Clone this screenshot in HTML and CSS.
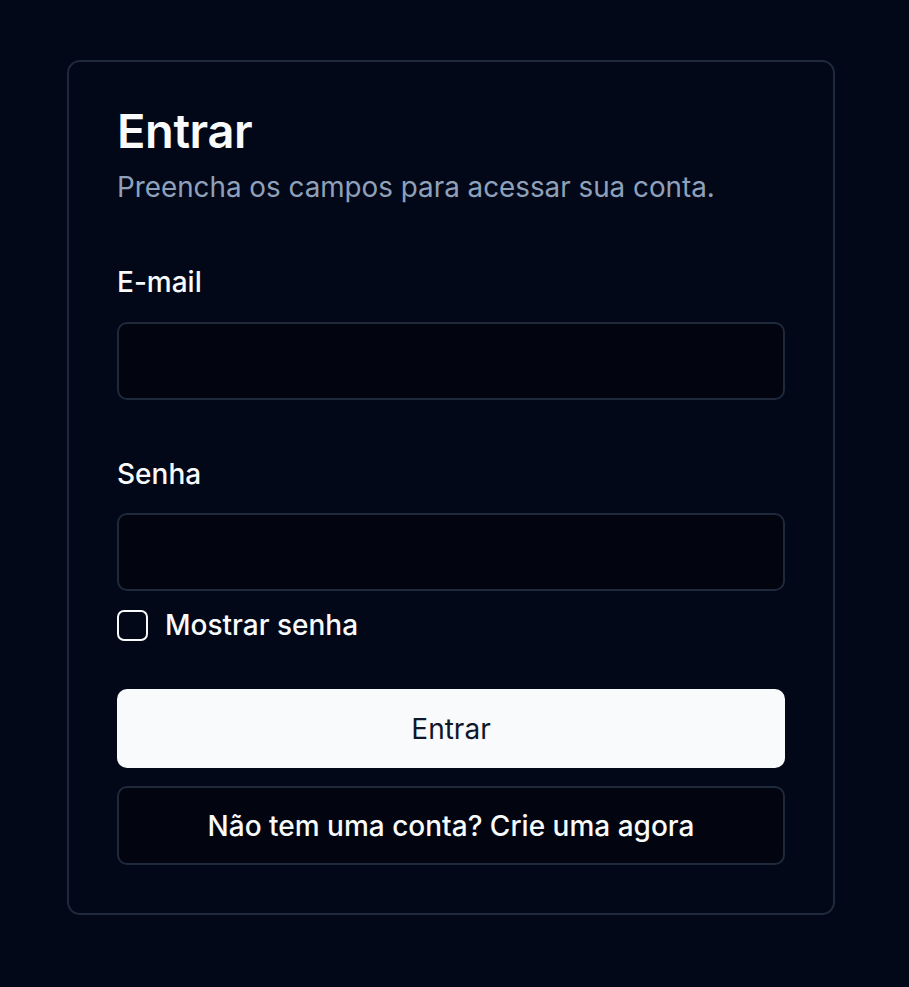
FILE: index.html
```html
<!DOCTYPE html>
<html lang="pt-BR">
<head>
<meta charset="utf-8">
<title>Entrar</title>
<link rel="stylesheet" href="styles.css">
</head>
<body>
<main class="page">
  <section class="card">
    <header class="card-header">
      <h1 class="title">Entrar</h1>
      <p class="subtitle">Preencha os campos para acessar sua conta.</p>
    </header>
    <form class="form">
      <div class="field">
        <label class="label" for="email">E-mail</label>
        <input class="input" id="email" type="email">
      </div>
      <div class="field field-password">
        <label class="label" for="senha">Senha</label>
        <input class="input" id="senha" type="password">
      </div>
      <label class="check">
        <span class="checkbox"></span>
        <span class="check-text">Mostrar senha</span>
      </label>
      <div class="actions">
        <button class="btn btn-primary" type="button">Entrar</button>
        <button class="btn btn-outline" type="button">Não tem uma conta? Crie uma agora</button>
      </div>
    </form>
  </section>
</main>
</body>
</html>
```
FILE: styles.css
```css
* { box-sizing: border-box; }
html, body { margin: 0; padding: 0; }
body {
  background: #020817;
  color: #f8fafc;
  font-family: Inter, "Noto Sans", sans-serif;
  min-height: 987px;
}
.page {
  padding: 60px 0 0 67px;
}
.card {
  width: 768px;
  border: 2px solid #1e293b;
  border-radius: 13px;
  padding: 48px;
  background: #020817;
}
.title {
  margin: 0;
  font-size: 47px;
  font-weight: 600;
  line-height: 42px;
  letter-spacing: -0.4px;
}
.subtitle {
  margin: 16px 0 0;
  font-size: 27.8px;
  color: #8fa1ba;
  line-height: 39px;
}
.form { margin-top: 59px; display: flex; flex-direction: column; }
.field { display: flex; flex-direction: column; gap: 22px; }
.field-password { margin-top: 58px; }
.label {
  font-size: 28px;
  font-weight: 500;
  line-height: 1.2;
}
.input {
  height: 78px;
  border: 2px solid #1e293b;
  border-radius: 10px;
  background: #02050f;
  color: #f8fafc;
  font: inherit;
}
.check {
  display: flex;
  align-items: center;
  gap: 17px;
  margin-top: 17px;
}
.checkbox {
  width: 31px;
  height: 31px;
  border: 2px solid #f8fafc;
  border-radius: 7px;
  flex: none;
}
.check-text {
  font-size: 28px;
  font-weight: 500;
  line-height: 34px;
}
.actions { display: flex; flex-direction: column; gap: 18px; margin-top: 47px; }
.btn {
  height: 79px;
  border-radius: 10px;
  font-family: inherit;
  font-size: 28px;
}
.btn-primary {
  background: #f8fafc;
  color: #0f172a;
  border: none;
  font-weight: 400;
}
.btn-outline {
  background: #02050f;
  border: 2px solid #1e293b;
  color: #f8fafc;
  font-weight: 500;
}
```
